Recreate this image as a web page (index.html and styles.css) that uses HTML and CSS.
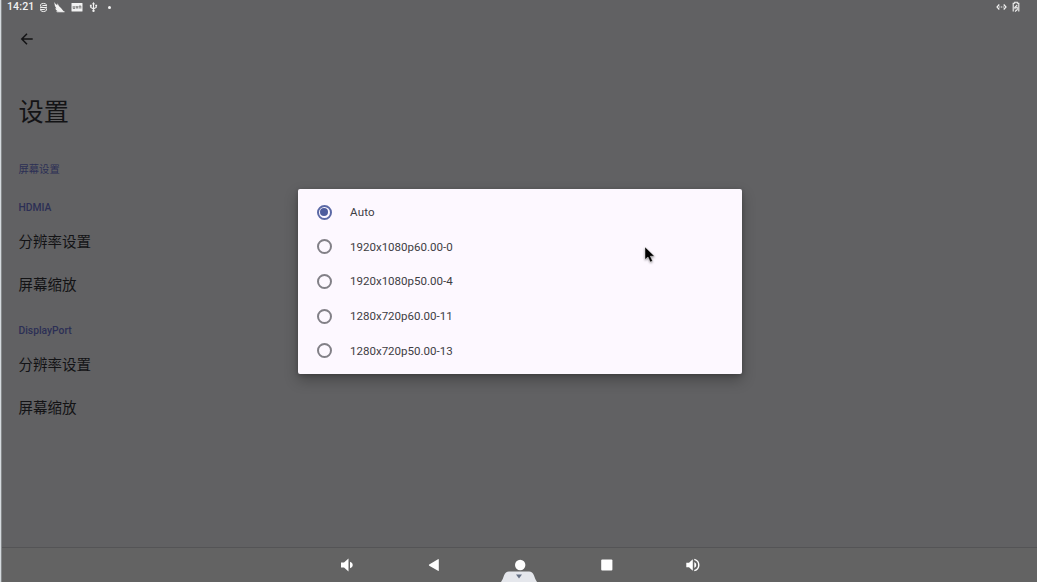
FILE: index.html
```html
<!DOCTYPE html>
<html lang="zh-CN">
<head>
<meta charset="utf-8">
<title>设置</title>
<link rel="stylesheet" href="styles.css">
</head>
<body>
<div class="screen">
  <header class="status">
    <span class="clock">14:21</span>
    <svg class="s-key" viewBox="0 0 10 12" fill="none" stroke="currentColor" stroke-width="1.1"><path d="M8.2 4.8V3Q8 1.5 5 1.5T1.8 3V4.5Q2 6 5 6T8.2 7.5V8.8Q8 10.5 5 10.5T1.8 8.8V7.2M1.2 6H8.8M3.8 3.8H8M2 8.2H6.4"/></svg>
    <svg class="s-wing" viewBox="0 0 12 12" fill="currentColor"><path d="M1.2 1Q2.2 2.8 4.2 4.2L4.6 2.2Q5.6 5.6 8.2 7.2L11 10.8H7Q3.4 10.4 2.2 7.3L3.4 7.4Q1.4 5 1.2 1Z"/><path d="M3.2 10.3H11.5V11.2H4Z"/></svg>
    <svg class="s-card" viewBox="0 0 12 12"><rect x=".5" y="2" width="11" height="8.6" rx=".6" fill="currentColor"/><path d="M2.2 5V7.5H3.8V5M5.2 5L6 7.5L6.9 5M8.2 7.6V5H9.8V7.6" fill="none" stroke="#666" stroke-width=".8"/></svg>
    <svg class="s-usb" viewBox="0 0 10 12" fill="none" stroke="currentColor" stroke-width="1.2"><path d="M5 2V10M2 4.8V6.5L5 8L8 6.5V4.5"/><path d="M5 .4L6.7 3H3.3ZM1 3.6H3V5.4H1ZM7 3.4H9V5.2H7Z" fill="currentColor" stroke="none"/><circle cx="5" cy="10.2" r="1.3" fill="currentColor" stroke="none"/></svg>
    <i class="dot"></i>
    <svg class="s-eth" viewBox="0 0 11 10" fill="none" stroke="currentColor" stroke-width="1.2"><path d="M3.3 2.5L1 5L3.3 7.5M7.7 2.5L10 5L7.7 7.5"/><path d="M3.2 5H4.3M5 5H6M6.7 5H7.8"/></svg>
    <svg class="s-bat" viewBox="0 0 8 12" fill="none" stroke="currentColor" stroke-width="1.1"><path d="M1.2 10.5V2.3H2.7V1.2H5.3V2.3H6.8V10.5"/><path d="M5.3 3.8L3 6.2H5.2V8.8L3 10.5M3 6V8.3"/></svg>
  </header>
  <main class="settings">
    <svg class="back" viewBox="0 0 14 14" fill="none" stroke="currentColor" stroke-width="1.5"><path d="M12.7 7H2M7 1.8L1.8 7L7 12.2"/></svg>
    <h1>设置</h1>
    <h2 class="page-label">屏幕设置</h2>
    <section class="group">
      <h2>HDMIA</h2>
      <p>分辨率设置</p>
      <p>屏幕缩放</p>
    </section>
    <section class="group">
      <h2>DisplayPort</h2>
      <p>分辨率设置</p>
      <p>屏幕缩放</p>
    </section>
  </main>
  <nav class="navbar">
    <svg viewBox="0 0 18 18" fill="currentColor"><path d="M3 6.5H6L10.5 2.5V15.5L6 11.5H3ZM12 5.8Q14.8 6.5 14.8 9T12 12.2Z"/></svg>
    <svg viewBox="0 0 18 18" fill="currentColor"><path d="M13.8 3.6V14.6Q13.8 15.3 13 14.8L4.2 9.8Q3.4 9.2 4.2 8.6L13 3.2Q13.8 2.9 13.8 3.6Z"/></svg>
    <svg viewBox="0 0 18 18" fill="currentColor"><circle cx="9.2" cy="9" r="5.2"/></svg>
    <svg viewBox="0 0 18 18" fill="currentColor"><rect x="3.2" y="3.5" width="11.2" height="11" rx="1"/></svg>
    <svg viewBox="0 0 18 18" fill="currentColor"><path d="M2.3 6.8H5L8.8 3.3V14.7L5 11.2H2.3ZM10.3 6Q12.3 7 12.3 9T10.3 12Z"/><path d="M10.3 3.3Q14.8 4.6 14.8 9T10.3 14.7" fill="none" stroke="currentColor" stroke-width="1.4"/></svg>
  </nav>
  <svg class="handle" viewBox="0 0 36 11"><path d="M0 11Q2 8 3 4.5Q4.5 .5 8 .5H28Q31.5 .5 33 4.5Q34 8 36 11Z" fill="#e5e7ec"/><path d="M15 3.5H21L18 7.4Z" fill="#657084"/></svg>
  <ul class="dialog">
    <li><i class="radio checked"></i><span class="auto">Auto</span></li>
    <li><i class="radio"></i>1920x1080p60.00-0</li>
    <li><i class="radio"></i>1920x1080p50.00-4</li>
    <li><i class="radio"></i>1280x720p60.00-11</li>
    <li><i class="radio"></i>1280x720p50.00-13</li>
  </ul>
  <svg class="cursor" viewBox="0 0 12 18"><path d="M1 1V13.5L4 11L6.3 16L8.5 15L6.3 10.2H10.5Z" fill="#000" stroke="#fff" stroke-width=".4"/></svg>
</div>
</body>
</html>
```
FILE: styles.css
```css
* { box-sizing: border-box; }
body { margin: 0; font-family: Roboto, "Noto Sans CJK SC", sans-serif; }
h1, h2, p, ul { margin: 0; padding: 0; font-weight: 400; }
svg { display: block; flex: none; }
.screen {
  position: relative;
  display: flex;
  flex-direction: column;
  width: 1037px;
  height: 582px;
  padding-left: 1px;
  overflow: hidden;
  background: linear-gradient(90deg, #d5dade 1px, #85888a 1px, #85888a 2px, #616163 2px);
}
.status { display: flex; align-items: center; height: 14px; padding: 0 18px 0 6px; color: #f2f2f2; }
.clock { width: 32px; font-size: 10.6px; line-height: 14px; font-weight: 500; letter-spacing: .1px; }
.s-key { width: 9px; height: 11px; margin-right: 5px; }
.s-wing { width: 12px; height: 12px; margin-right: 6px; }
.s-card { width: 12px; height: 12px; margin-right: 6px; }
.s-usb { width: 9px; height: 12px; }
.dot { width: 3px; height: 3px; margin-left: 10px; border-radius: 50%; background: currentColor; }
.s-eth { width: 11px; height: 10px; margin-left: auto; margin-right: 5px; }
.s-bat { width: 8px; height: 12px; margin-right: -1px; }
.settings { flex: 1; padding: 17.5px 0 0 17.5px; color: #131315; }
.back { width: 14px; height: 14px; margin-left: 1.5px; }
h1 { margin-top: 49.5px; font-size: 25.2px; line-height: 36px; }
h2 { font-size: 10.3px; line-height: 16px; font-weight: 500; color: #2c2f55; }
.page-label { margin-top: 31px; font-weight: 400; }
.group { height: 123.5px; padding-top: 22px; }
.group + .group { padding-top: 21.5px; }
.group p { height: 43px; font-size: 14.5px; line-height: 22px; }
.group h2 { margin-bottom: 15.5px; }
.navbar {
  display: flex;
  justify-content: space-between;
  height: 35px;
  margin-left: 1px;
  padding: 8px 335px 0 336px;
  color: #fff;
  background: #636363;
  border-top: 1px solid #545456;
}
.navbar svg { width: 18px; height: 18px; }
.handle { position: absolute; left: 500.5px; bottom: 0; width: 36px; height: 11px; }
.dialog {
  position: absolute;
  left: 298px;
  top: 189px;
  width: 443.5px;
  height: 184.5px;
  padding: 6px 0;
  list-style: none;
  background: #fdf8ff;
  border-radius: 2px;
  box-shadow: 0 6px 14px rgba(0, 0, 0, .28), 0 1px 4px rgba(0, 0, 0, .2);
}
.dialog li { display: flex; align-items: center; height: 34.6px; padding-left: 18.5px; font-size: 11.54px; color: #3e3d43; }
.auto { letter-spacing: .2px; }
.radio { display: flex; align-items: center; justify-content: center; width: 15px; height: 15px; margin-right: 18.5px; border: 2px solid #828087; border-radius: 50%; }
.checked { border-color: #5b69a6; }
.checked::after { content: ""; width: 8px; height: 8px; flex: none; border-radius: 50%; background: #4d5c9d; }
.cursor { position: absolute; left: 644px; top: 246px; width: 12px; height: 18px; filter: drop-shadow(0 1px 1px rgba(0, 0, 0, .4)); }
```
